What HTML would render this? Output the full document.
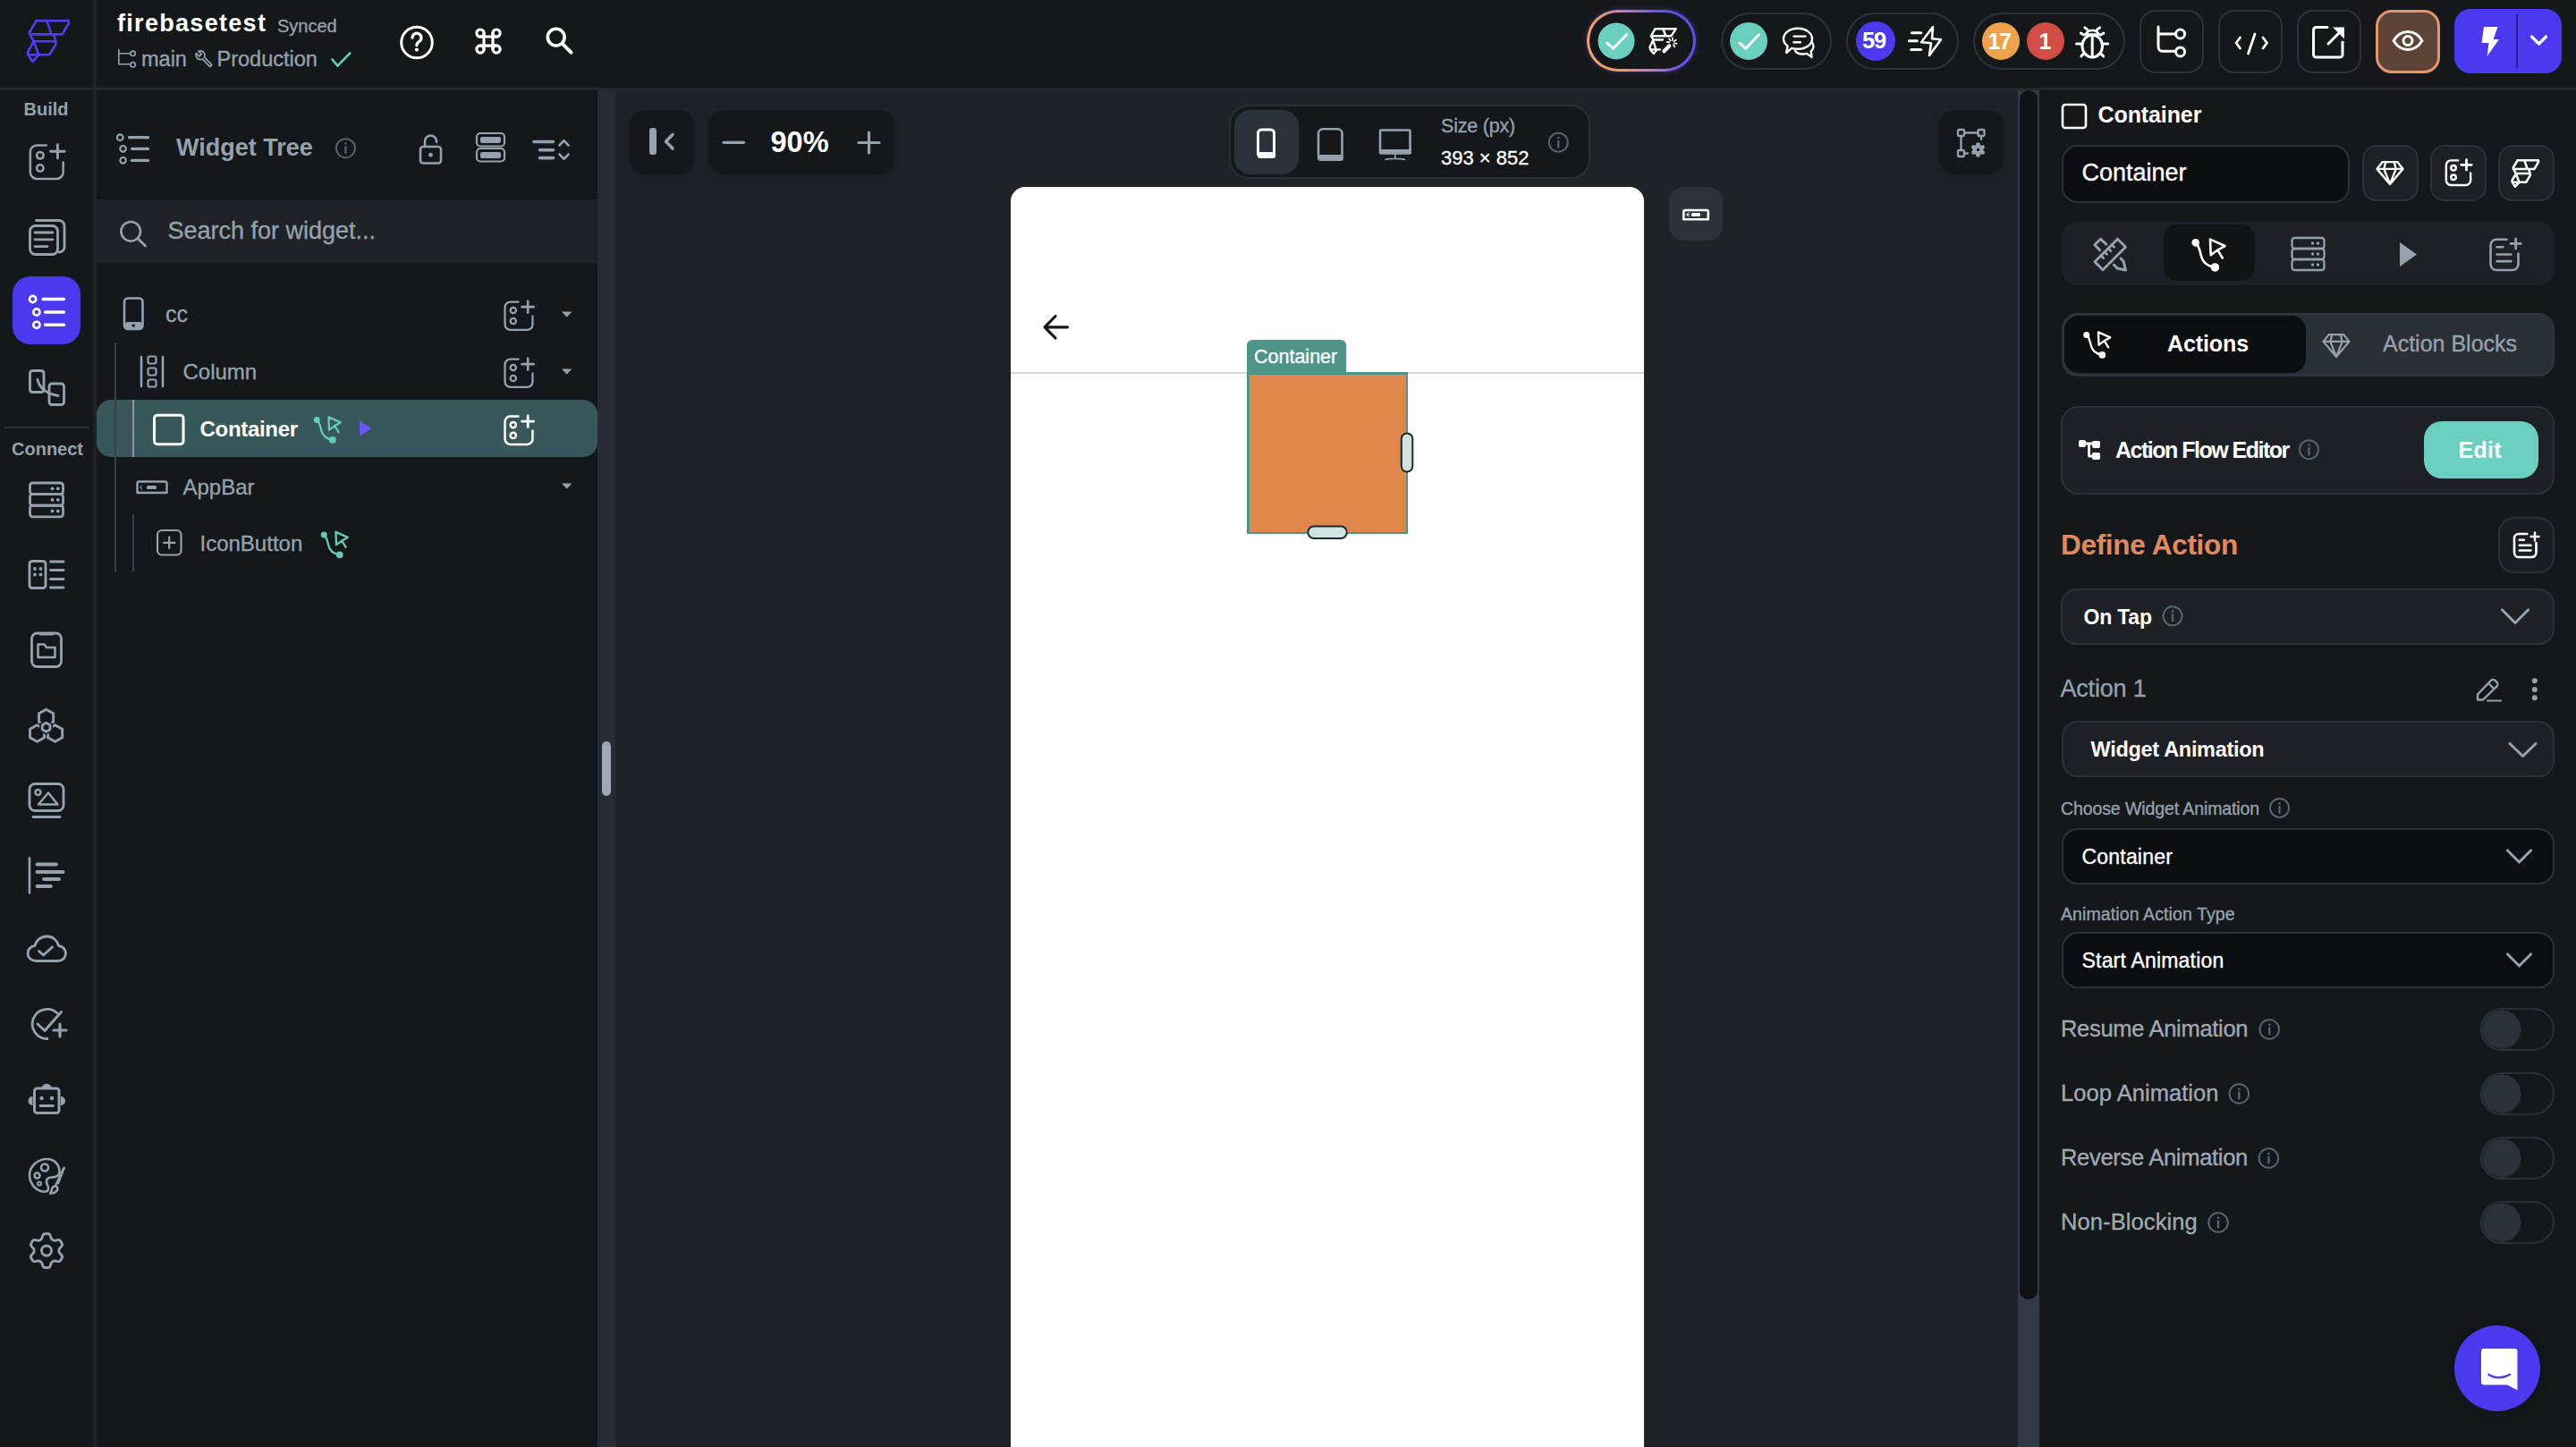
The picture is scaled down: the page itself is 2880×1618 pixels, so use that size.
<!DOCTYPE html>
<html><head><meta charset="utf-8"><title>FlutterFlow</title>
<style>
html,body{margin:0;padding:0;}
body{width:2880px;height:1618px;overflow:hidden;position:relative;background:#15181b;font-family:"Liberation Sans",sans-serif;}
.a{position:absolute;}
.t{white-space:nowrap;}
</style></head><body>
<div class="a" style="left:0px;top:0px;width:2880px;height:1618px;background:#15181b;"></div>
<div class="a" style="left:0px;top:98px;width:2880px;height:3px;background:#23272c;"></div>
<div class="a" style="left:104px;top:0px;width:4px;height:1618px;background:#1f2327;"></div>
<div class="a" style="left:108px;top:223px;width:560px;height:71px;background:#1f2327;"></div>
<div class="a" style="left:668px;top:101px;width:20px;height:1517px;background:#272b33;"></div>
<div class="a" style="left:673px;top:829px;width:10px;height:61px;background:#a0a8b4;border-radius:5px;"></div>
<div class="a" style="left:688px;top:101px;width:1568px;height:1517px;background:#1f2327;"></div>
<div class="a" style="left:2256px;top:101px;width:24px;height:1517px;background:#333944;"></div>
<div class="a" style="left:2258px;top:101px;width:20px;height:1352px;background:#111215;border-radius:10px;"></div>
<div class="a" style="left:1774px;top:11px;width:122px;height:69px;box-sizing:border-box;border-radius:35px;border:3px solid transparent;background:linear-gradient(#15181b,#15181b) padding-box,linear-gradient(65deg,#f2a46c 0%,#eb9a70 28%,#b47cc4 50%,#6a52ef 70%,#5b48f2 100%) border-box;box-shadow:0 0 6px rgba(120,90,240,0.35);"></div>
<div class="a" style="left:1924px;top:14px;width:124px;height:64px;box-sizing:border-box;border-radius:32px;border:2px solid #2e333a;"></div>
<div class="a" style="left:2064px;top:14px;width:126px;height:64px;box-sizing:border-box;border-radius:32px;border:2px solid #2e333a;"></div>
<div class="a" style="left:2206px;top:14px;width:170px;height:64px;box-sizing:border-box;border-radius:32px;border:2px solid #2e333a;"></div>
<div class="a" style="left:2392px;top:10.5px;width:71.5px;height:71px;box-sizing:border-box;border-radius:18px;border:2px solid #2e333a;"></div>
<div class="a" style="left:2480px;top:10.5px;width:71.5px;height:71px;box-sizing:border-box;border-radius:18px;border:2px solid #2e333a;"></div>
<div class="a" style="left:2568px;top:10.5px;width:71.5px;height:71px;box-sizing:border-box;border-radius:18px;border:2px solid #2e333a;"></div>
<div class="a" style="left:2656px;top:10.5px;width:72px;height:71px;box-sizing:border-box;border-radius:18px;border:3px solid #e6946a;background:#5e4436;"></div>
<div class="a" style="left:2744px;top:10px;width:120px;height:72px;background:#4b39ef;border-radius:18px;"></div>
<div class="a" style="left:2812.5px;top:16px;width:2.0px;height:60px;background:#2a2190;"></div>
<div class="a" style="left:14px;top:309px;width:76px;height:76px;background:#4b39ef;border-radius:20px;"></div>
<div class="a" style="left:4px;top:477px;width:96px;height:2px;background:#2a2e34;"></div>
<div class="a" style="left:537px;top:152.5px;width:23px;height:7.5px;background:#95a1ac;border-radius:2px;"></div>
<div class="a" style="left:537px;top:169.5px;width:23px;height:7.5px;background:#95a1ac;border-radius:2px;"></div>
<div class="a" style="left:140px;top:360px;width:19px;height:8px;background:#95a1ac;border-radius:3px;"></div>
<div class="a" style="left:128px;top:383px;width:2px;height:256px;background:#3a3f46;"></div>
<div class="a" style="left:148px;top:575px;width:2px;height:64px;background:#3a3f46;"></div>
<div class="a" style="left:108px;top:447px;width:560px;height:64px;background:#37575a;border-radius:16px;"></div>
<div class="a" style="left:128px;top:447px;width:2px;height:64px;background:#3a3f46;"></div>
<div class="a" style="left:148px;top:447px;width:2px;height:64px;background:#8e979f;"></div>
<div class="a" style="left:163.5px;top:542.5px;width:11.0px;height:4.5px;background:#95a1ac;border-radius:1.5px;"></div>
<div class="a" style="left:704px;top:123px;width:72px;height:72px;background:#15181b;border-radius:18px;box-shadow:0 2px 10px rgba(0,0,0,0.25);"></div>
<div class="a" style="left:726px;top:142.5px;width:8px;height:30.5px;background:#95a1ac;border-radius:3px;"></div>
<div class="a" style="left:792px;top:123px;width:208px;height:72px;background:#15181b;border-radius:18px;box-shadow:0 2px 10px rgba(0,0,0,0.25);"></div>
<div class="a" style="left:1374px;top:117px;width:404px;height:83px;background:#15181b;border-radius:22px;box-sizing:border-box;border:2px solid #2a2f36;"></div>
<div class="a" style="left:1380px;top:123px;width:71.5px;height:72px;background:#2d323a;border-radius:18px;"></div>
<div class="a" style="left:1406px;top:170px;width:19.5px;height:7px;background:#fff;border-radius:3px;"></div>
<div class="a" style="left:1473px;top:172.5px;width:28.5px;height:7.5px;background:#95a1ac;border-radius:4px;"></div>
<div class="a" style="left:1541.5px;top:167px;width:36.5px;height:5px;background:#95a1ac;"></div>
<div class="a" style="left:2168px;top:123px;width:72px;height:72px;background:#15181b;border-radius:18px;box-shadow:0 2px 10px rgba(0,0,0,0.25);"></div>
<div class="a" style="left:1130px;top:209px;width:708px;height:1491px;background:#ffffff;border-radius:16px;"></div>
<div class="a" style="left:1130px;top:415.5px;width:708px;height:2.0px;background:#d6d6d6;"></div>
<div class="a" style="left:1394px;top:380px;width:111px;height:38px;background:#4e9488;border-radius:6px 6px 0 0;"></div>
<div class="a" style="left:1394px;top:416px;width:180px;height:181px;background:#4e9488;"></div>
<div class="a" style="left:1396.5px;top:418.5px;width:175.0px;height:176.0px;background:#e0874c;"></div>
<div class="a" style="left:1866px;top:209px;width:60px;height:60px;background:#2d323a;border-radius:16px;"></div>
<div class="a" style="left:1891px;top:238.3px;width:10px;height:3.3999999999999773px;background:#fff;border-radius:1.5px;"></div>
<div class="a" style="left:2305px;top:161.5px;width:322px;height:65.0px;background:#0b0d10;border-radius:18px;box-sizing:border-box;border:2px solid #2c3138;"></div>
<div class="a" style="left:2640.5px;top:161.5px;width:63.0px;height:63.0px;background:#1d2125;border-radius:16px;box-sizing:border-box;border:2px solid #2c3138;"></div>
<div class="a" style="left:2716.5px;top:161.5px;width:63.0px;height:63.0px;background:#1d2125;border-radius:16px;box-sizing:border-box;border:2px solid #2c3138;"></div>
<div class="a" style="left:2792.5px;top:161.5px;width:63.0px;height:63.0px;background:#1d2125;border-radius:16px;box-sizing:border-box;border:2px solid #2c3138;"></div>
<div class="a" style="left:2305px;top:247.5px;width:550.5px;height:71.0px;background:#1d2125;border-radius:18px;"></div>
<div class="a" style="left:2418.5px;top:251px;width:102.5px;height:63px;background:#121315;border-radius:15px;"></div>
<div class="a" style="left:2305px;top:349.5px;width:550.5px;height:71.5px;background:#2a2f36;border-radius:18px;box-sizing:border-box;border:2px solid #30353d;"></div>
<div class="a" style="left:2307.5px;top:353px;width:270.5px;height:64px;background:#0b0e11;border-radius:16px;"></div>
<div class="a" style="left:2304px;top:453.5px;width:552px;height:99.0px;background:#1d2125;border-radius:20px;box-sizing:border-box;border:2px solid #2c3138;"></div>
<div class="a" style="left:2324px;top:492px;width:8px;height:8px;background:#fff;border-radius:2px;"></div>
<div class="a" style="left:2339px;top:493px;width:8.5px;height:7.5px;background:#fff;border-radius:2px;"></div>
<div class="a" style="left:2339px;top:506px;width:8.5px;height:8px;background:#fff;border-radius:2px;"></div>
<div class="a" style="left:2710px;top:471px;width:128px;height:64px;background:#6bcfbf;border-radius:20px;"></div>
<div class="a" style="left:2792.5px;top:577.5px;width:63.5px;height:63.0px;background:#1a1e22;border-radius:18px;box-sizing:border-box;border:2px solid #2c3138;"></div>
<div class="a" style="left:2304px;top:657.5px;width:552px;height:63.0px;background:#1d2125;border-radius:18px;box-sizing:border-box;border:2px solid #2c3138;"></div>
<div class="a" style="left:2304.5px;top:805.5px;width:551.0px;height:63.0px;background:#1d2125;border-radius:18px;box-sizing:border-box;border:2px solid #2c3138;"></div>
<div class="a" style="left:2304.5px;top:925.5px;width:551.0px;height:63.0px;background:#0b0e11;border-radius:18px;box-sizing:border-box;border:2px solid #2c3138;"></div>
<div class="a" style="left:2304.5px;top:1041.5px;width:551.0px;height:63.0px;background:#0b0e11;border-radius:18px;box-sizing:border-box;border:2px solid #2c3138;"></div>
<div class="a" style="left:2772.5px;top:1127px;width:83.5px;height:48px;border-radius:24px;box-sizing:border-box;border:2px solid #2b3037;"></div>
<div class="a" style="left:2772.5px;top:1199px;width:83.5px;height:48px;border-radius:24px;box-sizing:border-box;border:2px solid #2b3037;"></div>
<div class="a" style="left:2772.5px;top:1271px;width:83.5px;height:48px;border-radius:24px;box-sizing:border-box;border:2px solid #2b3037;"></div>
<div class="a" style="left:2772.5px;top:1343px;width:83.5px;height:48px;border-radius:24px;box-sizing:border-box;border:2px solid #2b3037;"></div>
<div class="a" style="left:2744px;top:1482px;width:96px;height:96px;background:#4b39ef;border-radius:48px;box-shadow:0 0 12px rgba(0,0,0,0.3);"></div>
<svg class="a" style="left:0;top:0" width="2880" height="1618" viewBox="0 0 2880 1618"><path d="M40.6,23.3 L76.5,23.3 L77,25.5 L69.8,38.4 L33.3,38.4 L33,36 Z" fill="none" stroke="#4f3cf4" stroke-width="2.6" stroke-linecap="round" stroke-linejoin="round" />
<path d="M52.4,23.3 L57.6,38.4" fill="none" stroke="#4f3cf4" stroke-width="2.6" stroke-linecap="round" stroke-linejoin="round" />
<path d="M33.3,38.4 L37.7,46.3 L62.4,46.3 L59.7,38.4" fill="none" stroke="#4f3cf4" stroke-width="2.6" stroke-linecap="round" stroke-linejoin="round" />
<path d="M37.7,46.3 L31,58.5 L31.5,61.2 L55.5,61.2 L62.4,49.5 L62.4,46.3" fill="none" stroke="#4f3cf4" stroke-width="2.6" stroke-linecap="round" stroke-linejoin="round" />
<path d="M38.3,47.5 L43.3,61.2" fill="none" stroke="#4f3cf4" stroke-width="2.6" stroke-linecap="round" stroke-linejoin="round" />
<path d="M31.5,61.2 L36.4,69 L43.5,61.2" fill="none" stroke="#4f3cf4" stroke-width="2.6" stroke-linecap="round" stroke-linejoin="round" />
<path d="M132.8,55.2 V71.7 H145.5 M132.8,59.8 H145.5" fill="none" stroke="#95a1ac" stroke-width="1.6" stroke-linecap="round" stroke-linejoin="round" />
<circle cx="148.6" cy="59.8" r="2.7" fill="none" stroke="#95a1ac" stroke-width="1.6"/>
<circle cx="148.6" cy="72.3" r="2.7" fill="none" stroke="#95a1ac" stroke-width="1.6"/>
<g transform="translate(217.35,55.0) scale(0.89)"><path fill="#95a1ac" d="M22.61 18.99l-9.08-9.08c.93-2.340.45-5.1-1.44-7C9.79.61 6.21.4 3.66 2.26L7.5 6.110 6.08 7.52 2.25 3.69C.39 6.230.6 9.82 2.9 12.11c1.86 1.86 4.57 2.35 6.89 1.48l9.110 9.11c.39.39 1.020.39 1.41 0l2.3-2.3c.4-.38.4-1.01 0-1.41zm-3 1.6l-9.46-9.46c-.61.45-1.29.72-2 .82-1.36.2-2.79-.21-3.83-1.25C3.37 9.76 2.93 8.5 3 7.26l3.09 3.09 4.24-4.24-3.090-3.09c1.24-.07 2.49.37 3.44 1.31 1.08 1.08 1.49 2.57 1.24 3.96-.12.71-.42 1.37-.88 1.96l9.45 9.45-.88.89z"/></g>
<path d="M371.4,66.4 L377.4,73.7 L391.2,59.5" fill="none" stroke="#5fc9b5" stroke-width="2.6" stroke-linecap="round" stroke-linejoin="round" />
<circle cx="466" cy="47.5" r="17.3" fill="none" stroke="#fff" stroke-width="3"/>
<path d="M461,42.2 a5,5 0 1 1 7.7,4.2 c-1.9,1.2 -2.8,2.2 -2.8,4 v0.3" fill="none" stroke="#fff" stroke-width="3.2" stroke-linecap="round" stroke-linejoin="round" />
<circle cx="465.9" cy="55.6" r="2.1" fill="#fff" stroke="none" stroke-width="2.5"/>
<path d="M541,37.1 V55 M551,37.1 V55 M537,41 H555 M537,51.1 H555" fill="none" stroke="#fff" stroke-width="3.2" stroke-linecap="round" stroke-linejoin="round" />
<circle cx="537" cy="37.1" r="4.1" fill="none" stroke="#fff" stroke-width="3.2"/>
<circle cx="555" cy="37.1" r="4.1" fill="none" stroke="#fff" stroke-width="3.2"/>
<circle cx="537" cy="55" r="4.1" fill="none" stroke="#fff" stroke-width="3.2"/>
<circle cx="555" cy="55" r="4.1" fill="none" stroke="#fff" stroke-width="3.2"/>
<circle cx="621.7" cy="41.6" r="9.4" fill="none" stroke="#fff" stroke-width="3.6"/>
<path d="M628.8,48.8 L638.5,58.6" fill="none" stroke="#fff" stroke-width="4" stroke-linecap="round" stroke-linejoin="round" stroke-linecap="butt"/>
<circle cx="1807" cy="45.9" r="20.5" fill="#6bcfbf" stroke="none" stroke-width="2.5"/>
<path d="M1796.7,48 L1803.7,54.2 L1818.4,38.7" fill="none" stroke="#fff" stroke-width="3" stroke-linecap="round" stroke-linejoin="round" />
<path d="M1850.5,32.2 H1873.8 L1868.6,40.2 H1846 Z M1859.3,32.2 L1862.4,40.2" fill="none" stroke="#fff" stroke-width="2.4" stroke-linecap="round" stroke-linejoin="round" />
<path d="M1846,40.2 L1848.4,44.5 H1859" fill="none" stroke="#fff" stroke-width="2.4" stroke-linecap="round" stroke-linejoin="round" />
<path d="M1848.4,44.5 L1844.5,52.5 L1845,55.4 H1856 M1845,55.4 L1848.8,60 L1852.7,55.4 M1848.6,46.5 L1851.5,55.4" fill="none" stroke="#fff" stroke-width="2.3" stroke-linecap="round" stroke-linejoin="round" />
<path d="M1860.5,57.2 L1866.3,51.2" fill="none" stroke="#fff" stroke-width="4.2" stroke-linecap="round" stroke-linejoin="round" />
<path d="M1871.96,48.29 L1874.71,48.77" fill="none" stroke="#fff" stroke-width="1.7" stroke-linecap="round" stroke-linejoin="round" />
<path d="M1870.81,50.09 L1872.41,52.39" fill="none" stroke="#fff" stroke-width="1.7" stroke-linecap="round" stroke-linejoin="round" />
<path d="M1866.44,47.31 L1863.69,46.83" fill="none" stroke="#fff" stroke-width="1.7" stroke-linecap="round" stroke-linejoin="round" />
<path d="M1867.59,45.51 L1865.99,43.21" fill="none" stroke="#fff" stroke-width="1.7" stroke-linecap="round" stroke-linejoin="round" />
<path d="M1869.69,45.04 L1870.17,42.29" fill="none" stroke="#fff" stroke-width="1.7" stroke-linecap="round" stroke-linejoin="round" />
<path d="M1871.49,46.19 L1873.79,44.59" fill="none" stroke="#fff" stroke-width="1.7" stroke-linecap="round" stroke-linejoin="round" />
<circle cx="1955" cy="45.9" r="21" fill="#6bcfbf" stroke="none" stroke-width="2.5"/>
<path d="M1944.7,48 L1951.7,54.2 L1966.4,38.7" fill="none" stroke="#fff" stroke-width="3" stroke-linecap="round" stroke-linejoin="round" />
<path d="M1998.5,51.5 c-3,-2.2 -4.5,-5 -4.5,-8.2 c0,-6.5 7,-11.5 16,-11.5 c9,0 16,5 16,11.5 c0,6.5 -7,11.5 -16,11.5 c-2.5,0 -4.8,-0.4 -6.8,-1 l-6,5.2 Z" fill="none" stroke="#fff" stroke-width="2.4" stroke-linecap="round" stroke-linejoin="round" />
<path d="M2005.5,40.6 H2018.5 M2005.5,47.2 H2012.8" fill="none" stroke="#fff" stroke-width="2.4" stroke-linecap="round" stroke-linejoin="round" />
<path d="M2007,57 c1.5,2 4.5,3.5 8.5,3.5 c1.5,0 3,-0.2 4.5,-0.6 l5.5,4 l-0.8,-6.2 c1.8,-1.6 2.8,-3.5 2.8,-5.6 c0,-1.5 -0.5,-3 -1.5,-4.3" fill="none" stroke="#fff" stroke-width="2.4" stroke-linecap="round" stroke-linejoin="round" />
<circle cx="2097" cy="45.9" r="22" fill="#4b39ef" stroke="none" stroke-width="2.5"/>
<path d="M2161,30 L2148,47.3 L2159,48.3 L2157,62 L2170,44.2 L2160,43.2 Z" fill="none" stroke="#fff" stroke-width="2.6" stroke-linecap="round" stroke-linejoin="round" />
<path d="M2137.5,36.7 H2147.8 M2134.4,45.8 H2143.3 M2136.7,55.4 H2147.8" fill="none" stroke="#fff" stroke-width="3" stroke-linecap="round" stroke-linejoin="round" />
<circle cx="2237" cy="45.9" r="21" fill="#eea24a" stroke="none" stroke-width="2.5"/>
<circle cx="2287" cy="45.9" r="21" fill="#d04c45" stroke="none" stroke-width="2.5"/>
<ellipse cx="2339.2" cy="51.6" rx="11.3" ry="12.4" fill="none" stroke="#fff" stroke-width="3"/>
<path d="M2331.5,38.5 c1.5,-3 4.5,-4.5 7.7,-4.5 c3.2,0 6.2,1.5 7.7,4.5 Z" fill="none" stroke="#fff" stroke-width="2.6" stroke-linecap="round" stroke-linejoin="round" />
<path d="M2339.2,40.5 V63" fill="none" stroke="#fff" stroke-width="3" stroke-linecap="round" stroke-linejoin="round" />
<path d="M2330.8,30.9 L2334.2,33.4 M2347.6,30.9 L2344.2,33.4 M2326.5,37.1 L2329.9,39 M2351.9,37.1 L2348.5,39 M2321.5,48.9 H2327.5 M2351,48.9 H2356.8 M2326.8,62.9 L2329.8,59.8 M2351.6,62.9 L2348.6,59.8" fill="none" stroke="#fff" stroke-width="3" stroke-linecap="round" stroke-linejoin="round" />
<path d="M2413,30 V52.3 a5,5 0 0 0 5,5 H2432.5 M2413,38 H2432.5" fill="none" stroke="#fff" stroke-width="3" stroke-linecap="round" stroke-linejoin="round" />
<circle cx="2437.6" cy="38" r="5" fill="none" stroke="#fff" stroke-width="3"/>
<circle cx="2437.6" cy="57.9" r="5" fill="none" stroke="#fff" stroke-width="3"/>
<path d="M2504.5,42 L2500,48 L2504.5,54 M2530,42 L2534.5,48 L2530,54 M2521,38 L2513.5,60" fill="none" stroke="#fff" stroke-width="2.8" stroke-linecap="round" stroke-linejoin="round" />
<path d="M2602,30.5 H2589.5 a3,3 0 0 0 -3,3 V61 a3,3 0 0 0 3,3 H2616 a3,3 0 0 0 3,-3 V47 M2603,49 L2617,35" fill="none" stroke="#fff" stroke-width="3" stroke-linecap="round" stroke-linejoin="round" />
<path d="M2608,30.5 L2621,30.5 L2621,43.5 Z" fill="#fff"/>
<path d="M2676,45.5 c4,-6.5 9.5,-10 16,-10 c6.5,0 12,3.5 16,10 c-4,6.5 -9.5,10 -16,10 c-6.5,0 -12,-3.5 -16,-10 Z" fill="none" stroke="#fff" stroke-width="3" stroke-linecap="round" stroke-linejoin="round" />
<circle cx="2692" cy="45.5" r="5" fill="none" stroke="#fff" stroke-width="3"/>
<path d="M2777,30 L2792.5,30 L2787.5,44 L2794,44 L2780.5,63 L2782.5,48 L2774.5,48 Z" fill="#fff"/>
<path d="M2830.5,41 L2838.5,49 L2846.5,41" fill="none" stroke="#fff" stroke-width="3.2" stroke-linecap="round" stroke-linejoin="round" />
<g transform="translate(32,160.7) scale(1.0125)"><path d="M19.5,1.8 H9 a7.2,7.2 0 0 0 -7.2,7.2 V31.5 a7.2,7.2 0 0 0 7.2,7.2 H31 a7.2,7.2 0 0 0 7.2,-7.2 V20.5" fill="none" stroke="#95a1ac" stroke-width="2.469135802469136" stroke-linecap="round"/><path d="M32,1 V16 M24.2,8.4 H39.6" fill="none" stroke="#95a1ac" stroke-width="2.8395061728395063" stroke-linecap="round"/><circle cx="12.7" cy="13" r="3.7" fill="none" stroke="#95a1ac" stroke-width="2.469135802469136"/><circle cx="12.7" cy="27" r="3.7" fill="none" stroke="#95a1ac" stroke-width="2.469135802469136"/></g>
<rect x="33.5" y="252.5" width="31" height="32" rx="6" fill="none" stroke="#95a1ac" stroke-width="2.85"/>
<path d="M40.5,246.5 H66 a6,6 0 0 1 6,6 V276 a6,6 0 0 1 -6,6" fill="none" stroke="#95a1ac" stroke-width="2.85" stroke-linecap="round" stroke-linejoin="round" />
<path d="M39,260 H59 M39,267.8 H59 M39,275.6 H53" fill="none" stroke="#95a1ac" stroke-width="2.85" stroke-linecap="round" stroke-linejoin="round" />
<circle cx="36.6" cy="334.5" r="3.6" fill="none" stroke="#fff" stroke-width="2.6"/>
<circle cx="40.9" cy="349" r="3.6" fill="none" stroke="#fff" stroke-width="2.6"/>
<circle cx="40.9" cy="363.3" r="3.6" fill="none" stroke="#fff" stroke-width="2.6"/>
<path d="M48,334.5 H71.5 M50.5,349 H71.5 M50.5,363.3 H71.5" fill="none" stroke="#fff" stroke-width="3.4" stroke-linecap="round" stroke-linejoin="round" />
<rect x="33.5" y="414.5" width="15.5" height="24" rx="3" fill="none" stroke="#95a1ac" stroke-width="2.85"/>
<rect x="55" y="429" width="16.5" height="23.5" rx="3" fill="none" stroke="#95a1ac" stroke-width="2.85"/>
<path d="M42,424.5 C44,434 52,440 65,442.5" fill="none" stroke="#95a1ac" stroke-width="2.85" stroke-linecap="round" stroke-linejoin="round" />
<rect x="33.5" y="540.0" width="37" height="12.6" rx="3" fill="none" stroke="#95a1ac" stroke-width="2.85"/>
<circle cx="58.5" cy="546.3" r="1.9" fill="#95a1ac" stroke="none" stroke-width="2.5"/>
<circle cx="64.8" cy="546.3" r="1.9" fill="#95a1ac" stroke="none" stroke-width="2.5"/>
<rect x="33.5" y="552.6" width="37" height="12.6" rx="3" fill="none" stroke="#95a1ac" stroke-width="2.85"/>
<circle cx="58.5" cy="558.9" r="1.9" fill="#95a1ac" stroke="none" stroke-width="2.5"/>
<circle cx="64.8" cy="558.9" r="1.9" fill="#95a1ac" stroke="none" stroke-width="2.5"/>
<rect x="33.5" y="565.2" width="37" height="12.6" rx="3" fill="none" stroke="#95a1ac" stroke-width="2.85"/>
<circle cx="58.5" cy="571.5" r="1.9" fill="#95a1ac" stroke="none" stroke-width="2.5"/>
<circle cx="64.8" cy="571.5" r="1.9" fill="#95a1ac" stroke="none" stroke-width="2.5"/>
<rect x="33" y="627.5" width="18" height="30" rx="3" fill="none" stroke="#95a1ac" stroke-width="2.85"/>
<circle cx="39" cy="636" r="1.9" fill="#95a1ac" stroke="none" stroke-width="2.5"/>
<circle cx="45.5" cy="636" r="1.9" fill="#95a1ac" stroke="none" stroke-width="2.5"/>
<circle cx="39" cy="642.5" r="1.9" fill="#95a1ac" stroke="none" stroke-width="2.5"/>
<circle cx="45.5" cy="642.5" r="1.9" fill="#95a1ac" stroke="none" stroke-width="2.5"/>
<path d="M56.5,628 H71 M56.5,637.5 H71 M56.5,647.5 H71 M56.5,657 H71" fill="none" stroke="#95a1ac" stroke-width="2.85" stroke-linecap="round" stroke-linejoin="round" />
<rect x="35.5" y="708" width="33" height="37.5" rx="6" fill="none" stroke="#95a1ac" stroke-width="2.85"/>
<path d="M45,709 H59" fill="none" stroke="#95a1ac" stroke-width="3" stroke-linecap="round" stroke-linejoin="round" />
<path d="M42.5,720.5 H49.5 L52,724 H61.5 V735 H42.5 Z" fill="none" stroke="#95a1ac" stroke-width="2.6" stroke-linecap="round" stroke-linejoin="round" />
<polygon points="51.60,811.80 43.55,807.15 43.55,797.85 51.60,793.20 59.65,797.85 59.65,807.15" fill="none" stroke="#95a1ac" stroke-width="2.9" stroke-linejoin="round"/>
<polygon points="41.60,829.30 33.55,824.65 33.55,815.35 41.60,810.70 49.65,815.35 49.65,824.65" fill="none" stroke="#95a1ac" stroke-width="2.9" stroke-linejoin="round"/>
<polygon points="61.60,829.30 53.55,824.65 53.55,815.35 61.60,810.70 69.65,815.35 69.65,824.65" fill="none" stroke="#95a1ac" stroke-width="2.9" stroke-linejoin="round"/>
<polygon points="51.60,821.80 44.15,817.50 44.15,808.90 51.60,804.60 59.05,808.90 59.05,817.50" fill="#15181b" stroke="none" stroke-width="0" stroke-linejoin="round"/>
<polygon points="51.60,818.20 47.27,815.70 47.27,810.70 51.60,808.20 55.93,810.70 55.93,815.70" fill="none" stroke="#95a1ac" stroke-width="2.8" stroke-linejoin="round"/>
<rect x="33" y="876.5" width="38" height="30" rx="6" fill="none" stroke="#95a1ac" stroke-width="2.85"/>
<circle cx="42.5" cy="886" r="3" fill="none" stroke="#95a1ac" stroke-width="2.5"/>
<path d="M43,899.5 L54,886.5 L64.5,899.5 Z" fill="none" stroke="#95a1ac" stroke-width="2.6" stroke-linecap="round" stroke-linejoin="round" />
<path d="M37,913.5 H67" fill="none" stroke="#95a1ac" stroke-width="2.85" stroke-linecap="round" stroke-linejoin="round" />
<path d="M33,959.5 V998.5" fill="none" stroke="#95a1ac" stroke-width="2.6" stroke-linecap="round" stroke-linejoin="round" />
<path d="M41.5,966.5 H63 M41.5,975 H70.5 M49,983 H66 M41.5,991 H57" fill="none" stroke="#95a1ac" stroke-width="3.8" stroke-linecap="round" stroke-linejoin="round" />
<path d="M40,1074.5 c-5,0 -9,-3.8 -9,-8.5 c0,-4.5 3.5,-8 8,-8.5 c1.5,-6.5 7,-10.5 13.5,-10.5 c6.5,0 11.5,4.5 13,10.5 c4.5,0.5 8,4 8,8.5 c0,4.5 -3.8,8.5 -8.5,8.5 Z" fill="none" stroke="#95a1ac" stroke-width="2.85" stroke-linecap="round" stroke-linejoin="round" />
<path d="M43.5,1063.5 L48.5,1068 L58.5,1059" fill="none" stroke="#95a1ac" stroke-width="3" stroke-linecap="round" stroke-linejoin="round" />
<path d="M64,1133 A16.5,16.5 0 1 0 53,1161.5" fill="none" stroke="#95a1ac" stroke-width="2.85" stroke-linecap="round" stroke-linejoin="round" />
<path d="M42,1145 L50,1152.5 L68.5,1131.5" fill="none" stroke="#95a1ac" stroke-width="3" stroke-linecap="round" stroke-linejoin="round" />
<path d="M67,1145 V1159 M60,1152 H74" fill="none" stroke="#95a1ac" stroke-width="3.2" stroke-linecap="round" stroke-linejoin="round" />
<rect x="38.5" y="1217" width="27.5" height="27.5" rx="3" fill="none" stroke="#95a1ac" stroke-width="3"/>
<path d="M31.5,1231 a5,5 0 0 1 5,-5 V1236 a5,5 0 0 1 -5,-5 Z M73,1231 a5,5 0 0 0 -5,-5 V1236 a5,5 0 0 0 5,-5 Z" fill="#95a1ac"/>
<path d="M46.5,1217.5 a5.7,5.7 0 0 1 11.4,0 Z" fill="#95a1ac"/>
<circle cx="46.5" cy="1228" r="2.2" fill="#95a1ac" stroke="none" stroke-width="2.5"/>
<circle cx="58" cy="1228" r="2.2" fill="#95a1ac" stroke="none" stroke-width="2.5"/>
<path d="M45,1236.5 H59.5" fill="none" stroke="#95a1ac" stroke-width="2.85" stroke-linecap="round" stroke-linejoin="round" />
<path d="M52.5,1296 c-10.5,0 -19.5,8 -19.5,18 c0,9.5 7.5,18.5 17,18.5 c3,0 4,-2 4,-4 c0,-3 -2,-4 -2,-7 c0,-3.5 2.5,-5 5.5,-5 c5,0 9,-1.5 9,-6.5 c0,-8 -6,-14 -14,-14 Z" fill="none" stroke="#95a1ac" stroke-width="2.6" stroke-linecap="round" stroke-linejoin="round" />
<circle cx="50" cy="1305.5" r="4" fill="none" stroke="#95a1ac" stroke-width="2.5"/>
<circle cx="41.5" cy="1314.5" r="3" fill="none" stroke="#95a1ac" stroke-width="2.5"/>
<circle cx="44" cy="1323.5" r="2" fill="none" stroke="#95a1ac" stroke-width="2"/>
<path d="M71.5,1306 L62,1326 M62,1326 c-2,0.5 -4,2 -4,4.5 l-2,4 c3,0 6,-1 7.5,-3 c1.5,-2 1.5,-4 -1.5,-5.5" fill="none" stroke="#95a1ac" stroke-width="2.6" stroke-linecap="round" stroke-linejoin="round" />
<path d="M71.5,1306 L65,1323" fill="none" stroke="#95a1ac" stroke-width="2.6" stroke-linecap="round" stroke-linejoin="round" />
<path d="M52.00,1379.50 L53.66,1379.57 L55.28,1379.89 L56.37,1382.18 L57.10,1384.50 L57.92,1385.81 L59.00,1386.38 L60.03,1387.03 L61.58,1387.09 L63.95,1386.55 L66.48,1386.35 L67.56,1387.60 L68.45,1389.00 L69.22,1390.47 L69.76,1392.04 L68.32,1394.13 L66.67,1395.91 L65.95,1397.28 L66.00,1398.50 L65.95,1399.72 L66.67,1401.09 L68.32,1402.87 L69.76,1404.96 L69.22,1406.53 L68.45,1408.00 L67.56,1409.40 L66.48,1410.65 L63.95,1410.45 L61.58,1409.91 L60.03,1409.97 L59.00,1410.62 L57.92,1411.19 L57.10,1412.50 L56.37,1414.82 L55.28,1417.11 L53.66,1417.43 L52.00,1417.50 L50.34,1417.43 L48.72,1417.11 L47.63,1414.82 L46.90,1412.50 L46.08,1411.19 L45.00,1410.62 L43.97,1409.97 L42.42,1409.91 L40.05,1410.45 L37.52,1410.65 L36.44,1409.40 L35.55,1408.00 L34.78,1406.53 L34.24,1404.96 L35.68,1402.87 L37.33,1401.09 L38.05,1399.72 L38.00,1398.50 L38.05,1397.28 L37.33,1395.91 L35.68,1394.13 L34.24,1392.04 L34.78,1390.47 L35.55,1389.00 L36.44,1387.60 L37.52,1386.35 L40.05,1386.55 L42.42,1387.09 L43.97,1387.03 L45.00,1386.38 L46.08,1385.81 L46.90,1384.50 L47.63,1382.18 L48.72,1379.89 L50.34,1379.57 L52.00,1379.50 Z" fill="none" stroke="#95a1ac" stroke-width="2.85" stroke-linejoin="round"/>
<circle cx="52" cy="1398.5" r="5.5" fill="none" stroke="#95a1ac" stroke-width="2.85"/>
<circle cx="134.2" cy="153.7" r="3.3" fill="none" stroke="#95a1ac" stroke-width="2.2"/>
<circle cx="137.6" cy="166.3" r="3.3" fill="none" stroke="#95a1ac" stroke-width="2.2"/>
<circle cx="137.6" cy="179.3" r="3.3" fill="none" stroke="#95a1ac" stroke-width="2.2"/>
<path d="M144.5,153.7 H165.5 M147.5,166.3 H165.5 M147.5,179.3 H165.5" fill="none" stroke="#95a1ac" stroke-width="3.3" stroke-linecap="round" stroke-linejoin="round" />
<circle cx="386.4" cy="165.7" r="10.5" fill="none" stroke="#59636d" stroke-width="2"/>
<path d="M386.4,164.2 V171.2" stroke="#59636d" stroke-width="2.3" stroke-linecap="round"/>
<circle cx="386.4" cy="160.5" r="1.3" fill="#59636d" stroke="none" stroke-width="2.5"/>
<rect x="470" y="164" width="23" height="18.5" rx="3" fill="none" stroke="#95a1ac" stroke-width="2.6"/>
<path d="M475,164 V158 a6.5,6.5 0 0 1 13,0 V159" fill="none" stroke="#95a1ac" stroke-width="2.6" stroke-linecap="round" stroke-linejoin="round" />
<circle cx="481.5" cy="173.2" r="2.4" fill="#95a1ac" stroke="none" stroke-width="2.5"/>
<rect x="533" y="149" width="31" height="14.5" rx="4" fill="none" stroke="#95a1ac" stroke-width="2.2"/>
<rect x="533" y="166" width="31" height="14.5" rx="4" fill="none" stroke="#95a1ac" stroke-width="2.2"/>
<path d="M597,158.5 H618.5 M603.5,167.8 H618.5 M603.5,176.6 H618.5" fill="none" stroke="#95a1ac" stroke-width="3.6" stroke-linecap="round" stroke-linejoin="round" />
<path d="M625.5,162.5 L630.5,157.2 L635.5,162.5 M625.5,172.5 L630.5,177.8 L635.5,172.5" fill="none" stroke="#95a1ac" stroke-width="2.6" stroke-linecap="round" stroke-linejoin="round" />
<circle cx="146.2" cy="258.8" r="10.8" fill="none" stroke="#95a1ac" stroke-width="2.6"/>
<path d="M154,266.5 L162.5,275" fill="none" stroke="#95a1ac" stroke-width="2.8" stroke-linecap="round" stroke-linejoin="round" />
<rect x="139" y="333.5" width="20.5" height="34.5" rx="4" fill="none" stroke="#95a1ac" stroke-width="2.6"/>
<circle cx="149.2" cy="364" r="1.8" fill="#15181b" stroke="none" stroke-width="2.5"/>
<g transform="translate(563,336) scale(0.85)"><path d="M19.5,1.8 H9 a7.2,7.2 0 0 0 -7.2,7.2 V31.5 a7.2,7.2 0 0 0 7.2,7.2 H31 a7.2,7.2 0 0 0 7.2,-7.2 V20.5" fill="none" stroke="#95a1ac" stroke-width="2.705882352941176" stroke-linecap="round"/><path d="M32,1 V16 M24.2,8.4 H39.6" fill="none" stroke="#95a1ac" stroke-width="3.1117647058823525" stroke-linecap="round"/><circle cx="12.7" cy="13" r="3.7" fill="none" stroke="#95a1ac" stroke-width="2.705882352941176"/><circle cx="12.7" cy="27" r="3.7" fill="none" stroke="#95a1ac" stroke-width="2.705882352941176"/></g>
<path d="M628,348.5 H639.5 L633.75,354.5 Z" fill="#95a1ac"/>
<path d="M158,399 V432 M182,399 V432" fill="none" stroke="#95a1ac" stroke-width="2.6" stroke-linecap="round" stroke-linejoin="round" />
<rect x="165.5" y="398.5" width="9" height="8" rx="2" fill="none" stroke="#95a1ac" stroke-width="2.2"/>
<rect x="165.5" y="411.5" width="9" height="8" rx="2" fill="none" stroke="#95a1ac" stroke-width="2.2"/>
<rect x="165.5" y="424.5" width="9" height="8" rx="2" fill="none" stroke="#95a1ac" stroke-width="2.2"/>
<g transform="translate(563,400) scale(0.85)"><path d="M19.5,1.8 H9 a7.2,7.2 0 0 0 -7.2,7.2 V31.5 a7.2,7.2 0 0 0 7.2,7.2 H31 a7.2,7.2 0 0 0 7.2,-7.2 V20.5" fill="none" stroke="#95a1ac" stroke-width="2.705882352941176" stroke-linecap="round"/><path d="M32,1 V16 M24.2,8.4 H39.6" fill="none" stroke="#95a1ac" stroke-width="3.1117647058823525" stroke-linecap="round"/><circle cx="12.7" cy="13" r="3.7" fill="none" stroke="#95a1ac" stroke-width="2.705882352941176"/><circle cx="12.7" cy="27" r="3.7" fill="none" stroke="#95a1ac" stroke-width="2.705882352941176"/></g>
<path d="M628,412.5 H639.5 L633.75,418.5 Z" fill="#95a1ac"/>
<rect x="172.5" y="464.2" width="32.5" height="32.5" rx="3.5" fill="none" stroke="#fff" stroke-width="3"/>
<g transform="translate(563,464) scale(0.85)"><path d="M19.5,1.8 H9 a7.2,7.2 0 0 0 -7.2,7.2 V31.5 a7.2,7.2 0 0 0 7.2,7.2 H31 a7.2,7.2 0 0 0 7.2,-7.2 V20.5" fill="none" stroke="#fff" stroke-width="2.9411764705882355" stroke-linecap="round"/><path d="M32,1 V16 M24.2,8.4 H39.6" fill="none" stroke="#fff" stroke-width="3.3823529411764706" stroke-linecap="round"/><circle cx="12.7" cy="13" r="3.7" fill="none" stroke="#fff" stroke-width="2.9411764705882355"/><circle cx="12.7" cy="27" r="3.7" fill="none" stroke="#fff" stroke-width="2.9411764705882355"/></g>
<g transform="translate(350,465.5) scale(1.0)"><circle cx="4.2" cy="3.9" r="3.5" fill="#65cbb8"/><circle cx="21.8" cy="26.3" r="3.9" fill="#65cbb8"/><path d="M4.2,3.9 C7.5,7 8,11 9,15 C10,20 13,25 21.8,26.3" fill="none" stroke="#65cbb8" stroke-width="2.3" stroke-linecap="round"/><path d="M17.4,0.9 L30.8,6.9 L24.2,10.6 L18,15.2 Z M24.2,10.6 L28.6,17.8" fill="none" stroke="#65cbb8" stroke-width="2.3" stroke-linecap="round" stroke-linejoin="round"/></g>
<path d="M402,470.5 L415.5,479 L402,487.5 Z" fill="#6a55f5"/>
<path d="M153.5,551 V540.5 a2,2 0 0 1 2,-2 H184.5 a2,2 0 0 1 2,2 V551 Z" fill="none" stroke="#95a1ac" stroke-width="2.4" stroke-linecap="round" stroke-linejoin="round" />
<path d="M158.8,542.8 L156.8,544.8 L158.8,546.8" fill="none" stroke="#95a1ac" stroke-width="1" stroke-linecap="round" stroke-linejoin="round" />
<path d="M628,540.5 H639.5 L633.75,546.5 Z" fill="#95a1ac"/>
<rect x="176" y="593" width="26.5" height="27.5" rx="5" fill="none" stroke="#95a1ac" stroke-width="2.2"/>
<path d="M189.2,600.5 V613 M183,606.8 H195.5" fill="none" stroke="#95a1ac" stroke-width="2.2" stroke-linecap="round" stroke-linejoin="round" />
<g transform="translate(358,594) scale(1.0)"><circle cx="4.2" cy="3.9" r="3.5" fill="#65cbb8"/><circle cx="21.8" cy="26.3" r="3.9" fill="#65cbb8"/><path d="M4.2,3.9 C7.5,7 8,11 9,15 C10,20 13,25 21.8,26.3" fill="none" stroke="#65cbb8" stroke-width="2.3" stroke-linecap="round"/><path d="M17.4,0.9 L30.8,6.9 L24.2,10.6 L18,15.2 Z M24.2,10.6 L28.6,17.8" fill="none" stroke="#65cbb8" stroke-width="2.3" stroke-linecap="round" stroke-linejoin="round"/></g>
<path d="M752,150.5 L744.5,158.3 L752,166" fill="none" stroke="#95a1ac" stroke-width="3.6" stroke-linecap="round" stroke-linejoin="round" />
<path d="M809,159.3 H831.5" fill="none" stroke="#95a1ac" stroke-width="3.2" stroke-linecap="round" stroke-linejoin="round" />
<path d="M971.5,148 V171 M960,159.5 H983" fill="none" stroke="#95a1ac" stroke-width="3.2" stroke-linecap="round" stroke-linejoin="round" />
<rect x="1406.5" y="145" width="18" height="30.5" rx="4" fill="none" stroke="#fff" stroke-width="3"/>
<rect x="1474" y="144.2" width="26.5" height="34" rx="5" fill="none" stroke="#95a1ac" stroke-width="2.6"/>
<rect x="1543" y="145.5" width="33.5" height="26" rx="1" fill="none" stroke="#95a1ac" stroke-width="2.6"/>
<path d="M1559.8,172 V176.5 M1549,178.3 C1554,177 1565,177 1570.5,178.3" fill="none" stroke="#95a1ac" stroke-width="1.7" stroke-linecap="round" stroke-linejoin="round" />
<circle cx="1742.3" cy="159.2" r="10.5" fill="none" stroke="#59636d" stroke-width="2"/>
<path d="M1742.3,157.7 V164.7" stroke="#59636d" stroke-width="2.3" stroke-linecap="round"/>
<circle cx="1742.3" cy="154.0" r="1.3" fill="#59636d" stroke="none" stroke-width="2.5"/>
<rect x="2189" y="145" width="7" height="7" rx="1.5" fill="none" stroke="#95a1ac" stroke-width="2.3"/>
<rect x="2211.5" y="145" width="7" height="7" rx="1.5" fill="none" stroke="#95a1ac" stroke-width="2.3"/>
<rect x="2189" y="168" width="7" height="7" rx="1.5" fill="none" stroke="#95a1ac" stroke-width="2.3"/>
<path d="M2196,148.5 H2211.5 M2192.5,152 V168 M2196,171.5 H2200 M2215,152 V156" fill="none" stroke="#95a1ac" stroke-width="2.3" stroke-linecap="round" stroke-linejoin="round" />
<path d="M2211.50,159.70 L2212.18,159.73 L2212.85,159.86 L2213.28,160.86 L2213.55,161.87 L2213.87,162.42 L2214.30,162.65 L2214.71,162.91 L2215.35,162.91 L2216.36,162.64 L2217.44,162.51 L2217.89,163.03 L2218.25,163.60 L2218.57,164.20 L2218.79,164.85 L2218.14,165.72 L2217.40,166.46 L2217.08,167.01 L2217.10,167.50 L2217.08,167.99 L2217.40,168.54 L2218.14,169.28 L2218.79,170.15 L2218.57,170.80 L2218.25,171.40 L2217.89,171.97 L2217.44,172.49 L2216.36,172.36 L2215.35,172.09 L2214.71,172.09 L2214.30,172.35 L2213.87,172.58 L2213.55,173.13 L2213.28,174.14 L2212.85,175.14 L2212.18,175.27 L2211.50,175.30 L2210.82,175.27 L2210.15,175.14 L2209.72,174.14 L2209.45,173.13 L2209.13,172.58 L2208.70,172.35 L2208.29,172.09 L2207.65,172.09 L2206.64,172.36 L2205.56,172.49 L2205.11,171.97 L2204.75,171.40 L2204.43,170.80 L2204.21,170.15 L2204.86,169.28 L2205.60,168.54 L2205.92,167.99 L2205.90,167.50 L2205.92,167.01 L2205.60,166.46 L2204.86,165.72 L2204.21,164.85 L2204.43,164.20 L2204.75,163.60 L2205.11,163.03 L2205.56,162.51 L2206.64,162.64 L2207.65,162.91 L2208.29,162.91 L2208.70,162.65 L2209.13,162.42 L2209.45,161.87 L2209.72,160.86 L2210.15,159.86 L2210.82,159.73 L2211.50,159.70 Z" fill="#95a1ac" stroke="#95a1ac" stroke-width="0.8" stroke-linejoin="round"/>
<circle cx="2211.5" cy="167.5" r="1.7" fill="#15181b" stroke="none" stroke-width="2.5"/>
<path d="M1193.5,365.8 H1168.5 M1180,353.5 L1168,365.8 L1180,378" fill="none" stroke="#14181b" stroke-width="3.2" stroke-linecap="round" stroke-linejoin="round" />
<rect x="1566.8" y="484.5" width="12.5" height="43" rx="6.2" fill="#cfe2df" stroke="#1c2a2a" stroke-width="2"/>
<rect x="1462.3" y="588.5" width="43.5" height="13.5" rx="6.7" fill="#cfe2df" stroke="#1c2a2a" stroke-width="2"/>
<path d="M1882.3,245.3 V237 a2,2 0 0 1 2,-2 H1907.8 a2,2 0 0 1 2,2 V245.3 Z" fill="none" stroke="#fff" stroke-width="2.6" stroke-linecap="round" stroke-linejoin="round" />
<path d="M1887.8,237.8 L1885.8,240 L1887.8,242.2 M1885.8,240 H1889" fill="none" stroke="#fff" stroke-width="1" stroke-linecap="round" stroke-linejoin="round" />
<rect x="2306" y="117" width="26" height="26" rx="3" fill="none" stroke="#fff" stroke-width="2.6"/>
<g transform="translate(2656.5,177.5) scale(1.0333333333333334)"><path d="M7,3.5 H23 L29,11 L15,27.5 L1,11 Z M1,11 H29 M10.5,3.5 L8.5,11 L15,27.5 L21.5,11 L19.5,3.5" fill="none" stroke="#fff" stroke-width="2.32258064516129" stroke-linejoin="round" stroke-linecap="round"/></g>
<g transform="translate(2733.5,178) scale(0.75)"><path d="M19.5,1.8 H9 a7.2,7.2 0 0 0 -7.2,7.2 V31.5 a7.2,7.2 0 0 0 7.2,7.2 H31 a7.2,7.2 0 0 0 7.2,-7.2 V20.5" fill="none" stroke="#fff" stroke-width="3.1999999999999997" stroke-linecap="round"/><path d="M32,1 V16 M24.2,8.4 H39.6" fill="none" stroke="#fff" stroke-width="3.6799999999999993" stroke-linecap="round"/><circle cx="12.7" cy="13" r="3.7" fill="none" stroke="#fff" stroke-width="3.1999999999999997"/><circle cx="12.7" cy="27" r="3.7" fill="none" stroke="#fff" stroke-width="3.1999999999999997"/></g>
<g transform="translate(2788.5,164.2)" ><g transform="scale(0.645)"><path d="M40.6,23.3 L76.5,23.3 L77,25.5 L69.8,38.4 L33.3,38.4 L33,36 Z M52.4,23.3 L57.6,38.4 M33.3,38.4 L37.7,46.3 L62.4,46.3 L59.7,38.4 M37.7,46.3 L31,58.5 L31.5,61.2 L55.5,61.2 L62.4,49.5 L62.4,46.3 M38.3,47.5 L43.3,61.2 M31.5,61.2 L36.4,69 L43.5,61.2" fill="none" stroke="#fff" stroke-width="4" stroke-linejoin="round" stroke-linecap="round"/></g></g>
<path d="M2367.5,267.3 L2376.4,276.3 L2351,301.7 L2342,292.7 Z" fill="none" stroke="#95a1ac" stroke-width="3" stroke-linecap="round" stroke-linejoin="round" />
<path d="M2348.89,285.84 l2.97,2.97" fill="none" stroke="#95a1ac" stroke-width="2.8" stroke-linecap="round" stroke-linejoin="round" />
<path d="M2352.97,281.78 l2.55,2.55" fill="none" stroke="#95a1ac" stroke-width="2.8" stroke-linecap="round" stroke-linejoin="round" />
<path d="M2357.05,277.71 l2.97,2.97" fill="none" stroke="#95a1ac" stroke-width="2.8" stroke-linecap="round" stroke-linejoin="round" />
<path d="M2361.12,273.65 l2.55,2.55" fill="none" stroke="#95a1ac" stroke-width="2.8" stroke-linecap="round" stroke-linejoin="round" />
<path d="M2347.6,279.6 L2341.9,273.8 L2348.5,267.3 L2354.8,273.1" fill="none" stroke="#95a1ac" stroke-width="3" stroke-linecap="round" stroke-linejoin="round" />
<path d="M2371,288.9 L2374.2,292.5 L2376.5,302 L2367,300 L2363.4,296.1" fill="none" stroke="#95a1ac" stroke-width="3" stroke-linecap="round" stroke-linejoin="round" />
<g transform="translate(2449.5,266.5) scale(1.2333333333333334)"><circle cx="4.2" cy="3.9" r="3.5" fill="#fff"/><circle cx="21.8" cy="26.3" r="3.9" fill="#fff"/><path d="M4.2,3.9 C7.5,7 8,11 9,15 C10,20 13,25 21.8,26.3" fill="none" stroke="#fff" stroke-width="2.108108108108108" stroke-linecap="round"/><path d="M17.4,0.9 L30.8,6.9 L24.2,10.6 L18,15.2 Z M24.2,10.6 L28.6,17.8" fill="none" stroke="#fff" stroke-width="2.108108108108108" stroke-linecap="round" stroke-linejoin="round"/></g>
<rect x="2562.5" y="266" width="36" height="12" rx="3" fill="none" stroke="#95a1ac" stroke-width="2.3"/>
<circle cx="2585.5" cy="272" r="1.7" fill="#95a1ac" stroke="none" stroke-width="2.5"/>
<circle cx="2591.5" cy="272" r="1.7" fill="#95a1ac" stroke="none" stroke-width="2.5"/>
<rect x="2562.5" y="278" width="36" height="12" rx="3" fill="none" stroke="#95a1ac" stroke-width="2.3"/>
<circle cx="2585.5" cy="284" r="1.7" fill="#95a1ac" stroke="none" stroke-width="2.5"/>
<circle cx="2591.5" cy="284" r="1.7" fill="#95a1ac" stroke="none" stroke-width="2.5"/>
<rect x="2562.5" y="290" width="36" height="12" rx="3" fill="none" stroke="#95a1ac" stroke-width="2.3"/>
<circle cx="2585.5" cy="296" r="1.7" fill="#95a1ac" stroke="none" stroke-width="2.5"/>
<circle cx="2591.5" cy="296" r="1.7" fill="#95a1ac" stroke="none" stroke-width="2.5"/>
<path d="M2683,271 L2702,284.5 L2683,298 Z" fill="#95a1ac"/>
<path d="M2802.5,267.8 H2791 a6.5,6.5 0 0 0 -6.5,6.5 V295.5 a6.5,6.5 0 0 0 6.5,6.5 H2809 a6.5,6.5 0 0 0 6.5,-6.5 V283.5" fill="none" stroke="#95a1ac" stroke-width="2.6" stroke-linecap="round" stroke-linejoin="round" />
<path d="M2812.7,266.8 V278 M2807.1,272.4 H2818.3" fill="none" stroke="#95a1ac" stroke-width="2.8" stroke-linecap="round" stroke-linejoin="round" />
<path d="M2791.5,276.2 H2798.5 M2791.5,284.5 H2807.4 M2791.5,292.1 H2807.4" fill="none" stroke="#95a1ac" stroke-width="2.6" stroke-linecap="round" stroke-linejoin="round" />
<g transform="translate(2328.5,370.5) scale(1.0)"><circle cx="4.2" cy="3.9" r="3.5" fill="#fff"/><circle cx="21.8" cy="26.3" r="3.9" fill="#fff"/><path d="M4.2,3.9 C7.5,7 8,11 9,15 C10,20 13,25 21.8,26.3" fill="none" stroke="#fff" stroke-width="2.3" stroke-linecap="round"/><path d="M17.4,0.9 L30.8,6.9 L24.2,10.6 L18,15.2 Z M24.2,10.6 L28.6,17.8" fill="none" stroke="#fff" stroke-width="2.3" stroke-linecap="round" stroke-linejoin="round"/></g>
<g transform="translate(2596.5,370.5) scale(1.0333333333333334)"><path d="M7,3.5 H23 L29,11 L15,27.5 L1,11 Z M1,11 H29 M10.5,3.5 L8.5,11 L15,27.5 L21.5,11 L19.5,3.5" fill="none" stroke="#95a1ac" stroke-width="2.129032258064516" stroke-linejoin="round" stroke-linecap="round"/></g>
<path d="M2332,496 H2339 M2335.5,496 V510 H2339" fill="none" stroke="#fff" stroke-width="2.8" stroke-linecap="round" stroke-linejoin="round" />
<circle cx="2581.5" cy="502.7" r="10.5" fill="none" stroke="#59636d" stroke-width="2"/>
<path d="M2581.5,501.2 V508.2" stroke="#59636d" stroke-width="2.3" stroke-linecap="round"/>
<circle cx="2581.5" cy="497.5" r="1.3" fill="#59636d" stroke="none" stroke-width="2.5"/>
<path d="M2825.3,597 H2816 a5,5 0 0 0 -5,5 V618 a5,5 0 0 0 5,5 H2830.5 a5,5 0 0 0 5,-5 V607" fill="none" stroke="#fff" stroke-width="2.6" stroke-linecap="round" stroke-linejoin="round" />
<path d="M2834,595.5 V604.5 M2829.5,600 H2838.5" fill="none" stroke="#fff" stroke-width="2.4" stroke-linecap="round" stroke-linejoin="round" />
<path d="M2816.8,603.7 H2821.8 M2816.8,609.8 H2829.5 M2816.8,615.6 H2829.5" fill="none" stroke="#fff" stroke-width="2.5" stroke-linecap="round" stroke-linejoin="round" />
<circle cx="2429" cy="688.8" r="10.5" fill="none" stroke="#59636d" stroke-width="2"/>
<path d="M2429,687.3 V694.3" stroke="#59636d" stroke-width="2.3" stroke-linecap="round"/>
<circle cx="2429" cy="683.5999999999999" r="1.3" fill="#59636d" stroke="none" stroke-width="2.5"/>
<path d="M2797.5,682 L2812,696.5 L2826.5,682" fill="none" stroke="#95a1ac" stroke-width="3.1" stroke-linecap="round" stroke-linejoin="round" />
<path d="M2785,760.8 a3.2,3.2 0 0 1 4.5,0 l2,2 a3.2,3.2 0 0 1 0,4.5 L2776,782.5 H2770 V776.5 Z M2782,764 L2788.5,770.5" fill="none" stroke="#95a1ac" stroke-width="2.4" stroke-linecap="round" stroke-linejoin="round" />
<path d="M2781,783.5 H2796" fill="none" stroke="#95a1ac" stroke-width="2" stroke-linecap="round" stroke-linejoin="round" />
<circle cx="2833.8" cy="761.2" r="3" fill="#95a1ac" stroke="none" stroke-width="2.5"/>
<circle cx="2833.8" cy="771" r="3" fill="#95a1ac" stroke="none" stroke-width="2.5"/>
<circle cx="2833.8" cy="780.3" r="3" fill="#95a1ac" stroke="none" stroke-width="2.5"/>
<path d="M2806,831.5 L2820.5,845.5 L2835,831.5" fill="none" stroke="#95a1ac" stroke-width="3.1" stroke-linecap="round" stroke-linejoin="round" />
<circle cx="2548.5" cy="903.4" r="10.5" fill="none" stroke="#59636d" stroke-width="2"/>
<path d="M2548.5,901.9 V908.9" stroke="#59636d" stroke-width="2.3" stroke-linecap="round"/>
<circle cx="2548.5" cy="898.1999999999999" r="1.3" fill="#59636d" stroke="none" stroke-width="2.5"/>
<path d="M2803.5,951 L2816.5,964 L2829.5,951" fill="none" stroke="#95a1ac" stroke-width="3.1" stroke-linecap="round" stroke-linejoin="round" />
<path d="M2803.5,1067 L2816.5,1080 L2829.5,1067" fill="none" stroke="#95a1ac" stroke-width="3.1" stroke-linecap="round" stroke-linejoin="round" />
<circle cx="2537.2" cy="1151" r="10.8" fill="none" stroke="#59636d" stroke-width="2"/>
<path d="M2537.2,1149.5 V1156.5" stroke="#59636d" stroke-width="2.3" stroke-linecap="round"/>
<circle cx="2537.2" cy="1145.8" r="1.3" fill="#59636d" stroke="none" stroke-width="2.5"/>
<circle cx="2797" cy="1151" r="21.5" fill="#2d323a" stroke="none" stroke-width="2.5"/>
<circle cx="2503.3" cy="1223" r="10.8" fill="none" stroke="#59636d" stroke-width="2"/>
<path d="M2503.3,1221.5 V1228.5" stroke="#59636d" stroke-width="2.3" stroke-linecap="round"/>
<circle cx="2503.3" cy="1217.8" r="1.3" fill="#59636d" stroke="none" stroke-width="2.5"/>
<circle cx="2797" cy="1223" r="21.5" fill="#2d323a" stroke="none" stroke-width="2.5"/>
<circle cx="2536.4" cy="1295" r="10.8" fill="none" stroke="#59636d" stroke-width="2"/>
<path d="M2536.4,1293.5 V1300.5" stroke="#59636d" stroke-width="2.3" stroke-linecap="round"/>
<circle cx="2536.4" cy="1289.8" r="1.3" fill="#59636d" stroke="none" stroke-width="2.5"/>
<circle cx="2797" cy="1295" r="21.5" fill="#2d323a" stroke="none" stroke-width="2.5"/>
<circle cx="2480" cy="1367" r="10.8" fill="none" stroke="#59636d" stroke-width="2"/>
<path d="M2480,1365.5 V1372.5" stroke="#59636d" stroke-width="2.3" stroke-linecap="round"/>
<circle cx="2480" cy="1361.8" r="1.3" fill="#59636d" stroke="none" stroke-width="2.5"/>
<circle cx="2797" cy="1367" r="21.5" fill="#2d323a" stroke="none" stroke-width="2.5"/>
<path d="M2777,1508 H2811.5 a3,3 0 0 1 3,3 V1554.5 L2803,1548.5 H2777 a3,3 0 0 1 -3,-3 V1511 a3,3 0 0 1 3,-3 Z" fill="#fff"/>
<path d="M2782.5,1537 C2789,1541.5 2798,1541.5 2806,1537" fill="none" stroke="#4b39ef" stroke-width="2.4" stroke-linecap="round" stroke-linejoin="round" /></svg>
<div class="a t" style="left:131px;top:13.1px;font-size:27px;line-height:27px;color:#ffffff;font-weight:700;letter-spacing:1.3px;">firebasetest</div>
<div class="a t" style="left:310px;top:18.9px;font-size:20px;line-height:20px;color:#95a1ac;-webkit-text-stroke:0.35px currentColor;">Synced</div>
<div class="a t" style="left:158px;top:55.1px;font-size:23.5px;line-height:23.5px;color:#95a1ac;-webkit-text-stroke:0.35px currentColor;">main</div>
<div class="a t" style="left:242.5px;top:55.1px;font-size:23.5px;line-height:23.5px;color:#95a1ac;-webkit-text-stroke:0.35px currentColor;">Production</div>
<div class="a t" style="left:2082px;top:32.5px;font-size:25.5px;line-height:25.5px;color:#fff;font-weight:700;letter-spacing:-1.2px;">59</div>
<div class="a t" style="left:2222.5px;top:33.8px;font-size:25px;line-height:25px;color:#fff;font-weight:700;letter-spacing:-1.5px;">17</div>
<div class="a t" style="left:2279.5px;top:33.8px;font-size:25px;line-height:25px;color:#fff;font-weight:700;">1</div>
<div class="a t" style="left:26.5px;top:112.1px;font-size:20px;line-height:20px;color:#95a1ac;font-weight:700;">Build</div>
<div class="a t" style="left:13px;top:492.1px;font-size:20px;line-height:20px;color:#95a1ac;font-weight:700;">Connect</div>
<div class="a t" style="left:197px;top:151.8px;font-size:27px;line-height:27px;color:#95a1ac;font-weight:700;">Widget Tree</div>
<div class="a t" style="left:187.5px;top:245.4px;font-size:27px;line-height:27px;color:#95a1ac;-webkit-text-stroke:0.35px currentColor;">Search for widget...</div>
<div class="a t" style="left:185px;top:339.3px;font-size:25px;line-height:25px;color:#95a1ac;-webkit-text-stroke:0.35px currentColor;">cc</div>
<div class="a t" style="left:204.5px;top:404.2px;font-size:24px;line-height:24px;color:#95a1ac;-webkit-text-stroke:0.35px currentColor;">Column</div>
<div class="a t" style="left:223.5px;top:468.3px;font-size:24px;line-height:24px;color:#fff;font-weight:700;letter-spacing:-0.3px;">Container</div>
<div class="a t" style="left:204.5px;top:532.7px;font-size:24px;line-height:24px;color:#95a1ac;-webkit-text-stroke:0.35px currentColor;">AppBar</div>
<div class="a t" style="left:223.5px;top:595.7px;font-size:24px;line-height:24px;color:#95a1ac;-webkit-text-stroke:0.35px currentColor;">IconButton</div>
<div class="a t" style="left:861.5px;top:143.0px;font-size:32.5px;line-height:32.5px;color:#fff;font-weight:700;">90%</div>
<div class="a t" style="left:1611px;top:131.3px;font-size:21.5px;line-height:21.5px;color:#95a1ac;-webkit-text-stroke:0.35px currentColor;letter-spacing:-0.2px;">Size (px)</div>
<div class="a t" style="left:1611px;top:165.9px;font-size:22px;line-height:22px;color:#fff;-webkit-text-stroke:0.35px currentColor;-webkit-text-stroke:0.3px #fff;">393 × 852</div>
<div class="a t" style="left:1402px;top:388.8px;font-size:21.5px;line-height:21.5px;color:#ffffff;-webkit-text-stroke:0.35px currentColor;">Container</div>
<div class="a t" style="left:2345.5px;top:115.8px;font-size:25px;line-height:25px;color:#fff;font-weight:700;letter-spacing:-0.1px;">Container</div>
<div class="a t" style="left:2327.5px;top:180.1px;font-size:27px;line-height:27px;color:#fff;-webkit-text-stroke:0.35px currentColor;">Container</div>
<div class="a t" style="left:2423px;top:372.0px;font-size:25px;line-height:25px;color:#fff;font-weight:700;letter-spacing:-0.1px;">Actions</div>
<div class="a t" style="left:2664px;top:372.0px;font-size:25px;line-height:25px;color:#95a1ac;-webkit-text-stroke:0.35px currentColor;">Action Blocks</div>
<div class="a t" style="left:2365px;top:490.8px;font-size:25px;line-height:25px;color:#fff;font-weight:700;letter-spacing:-1.5px;">Action Flow Editor</div>
<div class="a t" style="left:2748.5px;top:490.8px;font-size:25px;line-height:25px;color:#fff;font-weight:700;letter-spacing:0.3px;">Edit</div>
<div class="a t" style="left:2304px;top:593.6px;font-size:31.5px;line-height:31.5px;color:#e08b5e;font-weight:700;letter-spacing:-0.3px;">Define Action</div>
<div class="a t" style="left:2329.5px;top:678.5px;font-size:23px;line-height:23px;color:#fff;font-weight:700;letter-spacing:-0.2px;">On Tap</div>
<div class="a t" style="left:2303.5px;top:757.1px;font-size:27px;line-height:27px;color:#95a1ac;-webkit-text-stroke:0.35px currentColor;letter-spacing:-0.2px;">Action 1</div>
<div class="a t" style="left:2337.5px;top:826.5px;font-size:23.5px;line-height:23.5px;color:#fff;font-weight:700;letter-spacing:-0.3px;">Widget Animation</div>
<div class="a t" style="left:2304px;top:894.5px;font-size:19.5px;line-height:19.5px;color:#95a1ac;-webkit-text-stroke:0.35px currentColor;letter-spacing:-0.1px;">Choose Widget Animation</div>
<div class="a t" style="left:2327.5px;top:946.8px;font-size:23px;line-height:23px;color:#fff;-webkit-text-stroke:0.35px currentColor;letter-spacing:0.2px;">Container</div>
<div class="a t" style="left:2304px;top:1013.0px;font-size:19.5px;line-height:19.5px;color:#95a1ac;-webkit-text-stroke:0.35px currentColor;letter-spacing:0.1px;">Animation Action Type</div>
<div class="a t" style="left:2327.5px;top:1062.8px;font-size:23px;line-height:23px;color:#fff;-webkit-text-stroke:0.35px currentColor;letter-spacing:0.2px;">Start Animation</div>
<div class="a t" style="left:2304px;top:1138.4px;font-size:25.5px;line-height:25.5px;color:#a0a9b2;-webkit-text-stroke:0.35px currentColor;letter-spacing:-0.3px;">Resume Animation</div>
<div class="a t" style="left:2304px;top:1210.4px;font-size:25.5px;line-height:25.5px;color:#a0a9b2;-webkit-text-stroke:0.35px currentColor;letter-spacing:0.05px;">Loop Animation</div>
<div class="a t" style="left:2304px;top:1282.4px;font-size:25.5px;line-height:25.5px;color:#a0a9b2;-webkit-text-stroke:0.35px currentColor;letter-spacing:-0.3px;">Reverse Animation</div>
<div class="a t" style="left:2304px;top:1354.4px;font-size:25.5px;line-height:25.5px;color:#a0a9b2;-webkit-text-stroke:0.35px currentColor;letter-spacing:0.1px;">Non-Blocking</div>
</body></html>
